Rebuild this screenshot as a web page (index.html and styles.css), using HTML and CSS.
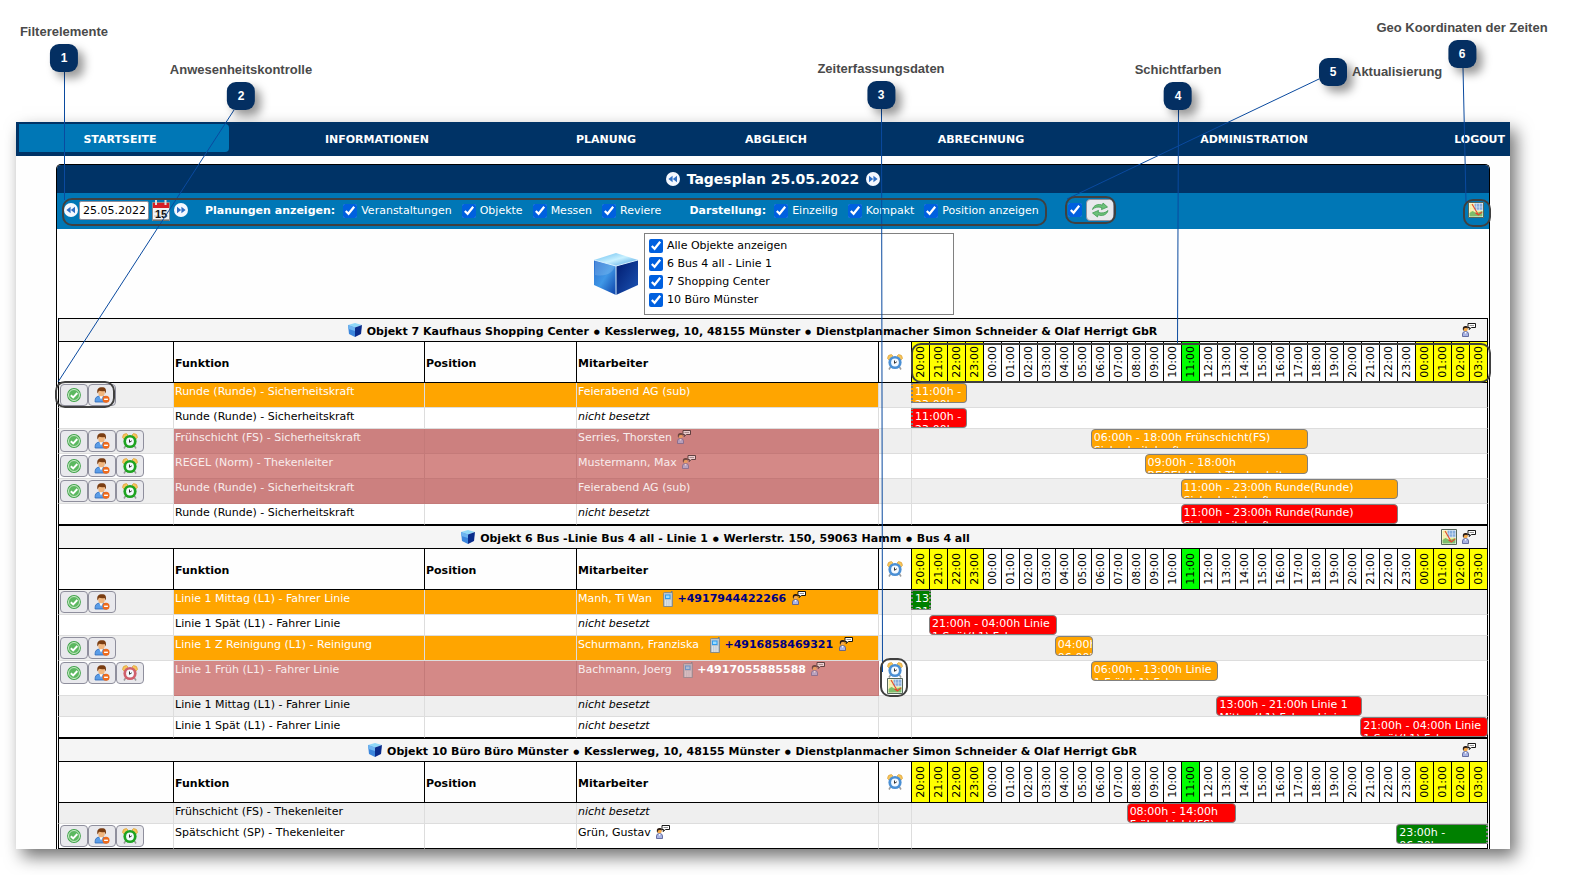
FILE: index.html
```html
<!DOCTYPE html>
<html lang="de">
<head>
<meta charset="utf-8">
<title>Tagesplan 25.05.2022</title>
<link rel="stylesheet" href="styles.css">
</head>
<body>
<svg class="defs" aria-hidden="true">
  <linearGradient id="gTop" x1="0" y1="0" x2="1" y2="1"><stop offset="0" stop-color="#5fb8ee"/><stop offset=".5" stop-color="#c9f1ff"/><stop offset="1" stop-color="#3f9be0"/></linearGradient>
  <linearGradient id="gLeft" x1="0" y1="0" x2="1" y2="1"><stop offset="0" stop-color="#2a6fd0"/><stop offset=".5" stop-color="#3f97e6"/><stop offset="1" stop-color="#0b3fa8"/></linearGradient>
  <linearGradient id="gRight" x1="0" y1="0" x2="1" y2="1"><stop offset="0" stop-color="#001a6e"/><stop offset="1" stop-color="#1c55b5"/></linearGradient>
  <symbol id="cube" viewBox="0 0 44 42"><path d="M22 0 44 7 22 13 0 7Z" fill="url(#gTop)"/><path d="M0 7 22 13V42L0 32Z" fill="url(#gLeft)"/><path d="M44 7 22 13V42L44 32Z" fill="url(#gRight)"/><path d="M0 7 22 13 44 7M22 13V42" fill="none" stroke="#d6f0ff" stroke-width="1"/><path d="M1 22C12 24 19 20 21 13L1 8Z" fill="#fff" opacity=".15"/></symbol>
  <symbol id="box" viewBox="0 0 14 14"><path d="M7 0 14 2 7 4.500 0 2Z" fill="#8fd8f8"/><path d="M0 2 7 4.500V14L1 11Z" fill="#3c86dc"/><path d="M0 2 7 4.500V8L.5 6Z" fill="#6db4f0"/><path d="M14 2 7 4.500V14L13 11Z" fill="#0a2c8c"/></symbol>
  <symbol id="prev" viewBox="0 0 14 14"><circle cx="7" cy="7" r="7" fill="#f4f8ff"/><path d="M6.600 3.800v6.400L2.400 7ZM11 3.800v6.400L6.800 7Z" fill="#2f6fc4"/></symbol>
  <symbol id="next" viewBox="0 0 14 14"><circle cx="7" cy="7" r="7" fill="#f4f8ff"/><path d="M7.400 3.800v6.400L11.600 7ZM3 3.800v6.400L7.200 7Z" fill="#2f6fc4"/></symbol>
  <symbol id="refresh" viewBox="0 0 18 16"><path d="M1.500 7.500C2.500 3 7.500 1.500 11.500 3.200L12 1l4.500 4-6 2.600.3-2C7 4.500 4 5 1.500 7.500Z" fill="#6cc07a" stroke="#3d9a50" stroke-width=".8"/><path d="M17 8.500C16 13 11 14.500 7 12.800L6.500 15 1.500 11l6-2.600-.3 2C11 11.500 14.500 11 17 8.500Z" fill="#6cc07a" stroke="#3d9a50" stroke-width=".8"/></symbol>
  <symbol id="map" viewBox="0 0 16 16"><path d="M.5.5h15v15H.5Z" fill="#fff" stroke="#56675a"/><path d="M1.500 1.500h5v13h-5Z" fill="#f4ec98"/><path d="M6.500 1.500h8v7h-8Z" fill="#86addd"/><path d="M6.500 8.500h8v3h-8Z" fill="#f4ec98"/><path d="M1.500 11l3-2 4 2 6-2v5.500h-13Z" fill="#7dbd6b"/><path d="M1.500 5h13M1.500 8h13M4 1.500v7M8.500 1.500v9M11.500 1.500v7" stroke="#fff" stroke-width=".5" opacity=".8"/><path d="M4 2 10.500 13 14 10M10.500 13 7.500 11" fill="none" stroke="#e3492f" stroke-width="1.100"/></symbol>
  <symbol id="say" viewBox="0 0 14 14"><path d="M.5 13.500V11q0-2.500 3-2.500t3 2.500v2.500Z" fill="#a9b4e4" stroke="#4c568f" stroke-width=".8"/><path d="M2.600 9l1 2 1-2Z" fill="#fff"/><circle cx="3.500" cy="6" r="2.300" fill="#f5a94a"/><path d="M.8 6.500C.5 3 3 2.500 5.500 3.500L6 5.500 4 4.800 2 5.500 1.500 8Z" fill="#2b1c14"/><path d="M6 .5h7.500v4H9.500L7 6.500l.5-2H6Z" fill="#fff" stroke="#000" stroke-width=".9"/><path d="M7.500 2.500h4.500" stroke="#777" stroke-width=".8"/></symbol>
  <symbol id="phone" viewBox="0 0 10 16"><path d="M8 0h1.500v3H8Z" fill="#6f7a86"/><path d="M.5 2.500q0-1 1-1h7q1 0 1 1v13h-9Z" fill="#b9c4ce" stroke="#75818d" stroke-width=".8"/><path d="M2 3.500h5.500V8H2Z" fill="#2d9cf0"/><path d="M3 4.500h3.500V7H3Z" fill="#9bdcff"/><path d="M2 10h6M2 12h6M2 14h6" stroke="#fff" stroke-dasharray="1.400 .8"/></symbol>
  <symbol id="ok" viewBox="0 0 14 14"><circle cx="7" cy="7" r="6.900" fill="#3fa348"/><circle cx="7" cy="7" r="5.500" fill="#5cb860" stroke="#d9f2d7" stroke-width=".9"/><path d="M3.800 7.200 6.200 9.500 10.300 5" fill="none" stroke="#fff" stroke-width="1.900"/></symbol>
  <symbol id="minus" viewBox="0 0 15 16"><path d="M.6 15C.4 10.500 2 9 6.500 9s6 1.500 6 6Z" fill="#5a9de8" stroke="#2b66b5" stroke-width=".8"/><path d="M4.800 9 6.500 12.500 8.500 9Z" fill="#fff"/><ellipse cx="7" cy="5.400" rx="3.300" ry="3.900" fill="#f1b67e"/><path d="M3 6.500C2 2 4 .2 7.500.2S12 2 11.300 6.500L10 4Q7 4.500 4.500 3.800Z" fill="#7a3d12"/><circle cx="11.500" cy="12.300" r="3.500" fill="#ee6a1c"/><path d="M9.600 12.300h3.800" stroke="#fff" stroke-width="1.400"/></symbol>
  <symbol id="alarm" viewBox="0 0 16 16"><path d="M3.500 13 2 15.500M12.500 13l1.500 2.500" stroke="#9a9a9a" stroke-width="1.500"/><path d="M.5 4.500Q.5.500 4.500.5L6 2 2 6ZM15.500 4.500q0-4-4-4L10 2l4 4Z" fill="#f7c55c" stroke="#d79a2c" stroke-width=".6"/><circle cx="8" cy="8.500" r="6.600" fill="currentColor"/><circle cx="8" cy="8.500" r="3.900" fill="#f5faff"/><path d="M7.500 6.500v2.800l2.300-1.500" fill="none" stroke="#333" stroke-width="1"/></symbol>
</svg>

<main class="figure">
<div class="page">
  <nav class="nav">
    <a class="active" href="#">STARTSEITE</a><a href="#">INFORMATIONEN</a><a href="#">PLANUNG</a><a href="#">ABGLEICH</a><a href="#">ABRECHNUNG</a><a href="#">ADMINISTRATION</a><a class="logout" href="#">LOGOUT</a>
  </nav>

  <section class="panel">
    <header class="heading">
      <button class="round" aria-label="Vorheriger Tag"><svg><use href="#prev"/></svg></button>
      <h1>Tagesplan 25.05.2022</h1>
      <button class="round" aria-label="Nächster Tag"><svg><use href="#next"/></svg></button>
    </header>

    <form class="filters">
      <div class="date">
        <button type="button" class="round" aria-label="Zurück"><svg><use href="#prev"/></svg></button>
        <input type="text" value="25.05.2022" aria-label="Datum">
        <button type="button" class="cal" aria-label="Kalender"><svg viewBox="0 0 18 21"><path d="M.5 2.500h17v18H.5Z" fill="#f4f4f4" stroke="#8a8a8a"/><path d="M1 3h16v5H1Z" fill="#d61f26"/><path d="M1 19.500h16v1H1Z" fill="#555"/><path d="M4 0v5M13.500 0v5" stroke="#ddd" stroke-width="2"/><path d="M2 12h14M2 16h14" stroke="#ccc"/><text class="day" x="9" y="18" text-anchor="middle">15</text></svg></button>
        <button type="button" class="round" aria-label="Weiter"><svg><use href="#next"/></svg></button>
      </div>
      <div class="group">
        <b>Planungen anzeigen:</b>
        <label><input type="checkbox" checked>Veranstaltungen</label>
        <label><input type="checkbox" checked>Objekte</label>
        <label><input type="checkbox" checked>Messen</label>
        <label><input type="checkbox" checked>Reviere</label>
      </div>
      <div class="group">
        <b>Darstellung:</b>
        <label><input type="checkbox" checked>Einzeilig</label>
        <label><input type="checkbox" checked>Kompakt</label>
        <label><input type="checkbox" checked>Position anzeigen</label>
      </div>
      <div class="update">
        <input type="checkbox" checked aria-label="Automatisch aktualisieren">
        <button type="button" class="btn" aria-label="Aktualisieren"><svg class="i18"><use href="#refresh"/></svg></button>
      </div>
      <button type="button" class="geo" aria-label="Karte"><svg class="i16"><use href="#map"/></svg></button>
    </form>

    <div class="objects">
      <svg class="bigcube"><use href="#cube"/></svg>
      <div class="objectlist">
        <label><input type="checkbox" checked>Alle Objekte anzeigen</label>
        <label><input type="checkbox" checked>6 Bus 4 all - Linie 1</label>
        <label><input type="checkbox" checked>7 Shopping Center</label>
        <label><input type="checkbox" checked>10 Büro Münster</label>
      </div>
    </div>

    <table class="plan">
      <colgroup><col class="c-act"><col class="c-fun"><col class="c-pos"><col class="c-emp"><col class="c-clock"><col span="32"></colgroup>
      <thead>
      <tr><th class="title" colspan="37"><div><span class="name"><svg class="i14"><use href="#box"/></svg><span>Objekt 7 Kaufhaus Shopping Center <span class="dot">●</span> Kesslerweg, 10, 48155 Münster <span class="dot">●</span> Dienstplanmacher Simon Schneider &amp; Olaf Herrigt GbR</span></span><span class="tools"><svg class="i14"><use href="#say"/></svg></span></div></th></tr>
      <tr class="head"><th></th><th>Funktion</th><th>Position</th><th>Mitarbeiter</th><th class="clock"><svg class="i16 blue"><use href="#alarm"/></svg></th><th><span>20:00</span></th><th><span>21:00</span></th><th><span>22:00</span></th><th><span>23:00</span></th><th><span>00:00</span></th><th><span>01:00</span></th><th><span>02:00</span></th><th><span>03:00</span></th><th><span>04:00</span></th><th><span>05:00</span></th><th><span>06:00</span></th><th><span>07:00</span></th><th><span>08:00</span></th><th><span>09:00</span></th><th><span>10:00</span></th><th><span>11:00</span></th><th><span>12:00</span></th><th><span>13:00</span></th><th><span>14:00</span></th><th><span>15:00</span></th><th><span>16:00</span></th><th><span>17:00</span></th><th><span>18:00</span></th><th><span>19:00</span></th><th><span>20:00</span></th><th><span>21:00</span></th><th><span>22:00</span></th><th><span>23:00</span></th><th><span>00:00</span></th><th><span>01:00</span></th><th><span>02:00</span></th><th><span>03:00</span></th></tr>
      </thead>
      <tbody>
      <tr class="orange"><td class="act"><div><button class="btn" aria-label="Anwesend"><svg class="i14"><use href="#ok"/></svg></button><button class="btn" aria-label="Abwesend"><svg class="i16"><use href="#minus"/></svg></button></div></td><td>Runde (Runde) - Sicherheitskraft</td><td></td><td>Feierabend AG (sub)</td><td></td><td class="lane" colspan="32"><div class="bar b-orange from" style="--s:0;--h:3">11:00h -<br>23:00h</div></td></tr>
      <tr><td></td><td>Runde (Runde) - Sicherheitskraft</td><td></td><td><i>nicht besetzt</i></td><td></td><td class="lane" colspan="32"><div class="bar b-red from" style="--s:0;--h:3">11:00h -<br>23:00h</div></td></tr>
      <tr class="pink"><td class="act"><div><button class="btn" aria-label="Anwesend"><svg class="i14"><use href="#ok"/></svg></button><button class="btn" aria-label="Abwesend"><svg class="i16"><use href="#minus"/></svg></button><button class="btn" aria-label="Zeit"><svg class="i16 green"><use href="#alarm"/></svg></button></div></td><td>Frühschicht (FS) - Sicherheitskraft</td><td></td><td>Serries, Thorsten <svg class="i14"><use href="#say"/></svg></td><td></td><td class="lane" colspan="32"><div class="bar b-orange" style="--s:10;--h:12">06:00h - 18:00h Frühschicht(FS)<br>Sicherheitskraft</div></td></tr>
      <tr class="pink"><td class="act"><div><button class="btn" aria-label="Anwesend"><svg class="i14"><use href="#ok"/></svg></button><button class="btn" aria-label="Abwesend"><svg class="i16"><use href="#minus"/></svg></button><button class="btn" aria-label="Zeit"><svg class="i16 green"><use href="#alarm"/></svg></button></div></td><td>REGEL (Norm) - Thekenleiter</td><td></td><td>Mustermann, Max <svg class="i14"><use href="#say"/></svg></td><td></td><td class="lane" colspan="32"><div class="bar b-orange" style="--s:13;--h:9">09:00h - 18:00h<br>REGEL(Norm) Thekenleiter</div></td></tr>
      <tr class="pink"><td class="act"><div><button class="btn" aria-label="Anwesend"><svg class="i14"><use href="#ok"/></svg></button><button class="btn" aria-label="Abwesend"><svg class="i16"><use href="#minus"/></svg></button><button class="btn" aria-label="Zeit"><svg class="i16 green"><use href="#alarm"/></svg></button></div></td><td>Runde (Runde) - Sicherheitskraft</td><td></td><td>Feierabend AG (sub)</td><td></td><td class="lane" colspan="32"><div class="bar b-orange" style="--s:15;--h:12">11:00h - 23:00h Runde(Runde)<br>Sicherheitskraft</div></td></tr>
      <tr><td></td><td>Runde (Runde) - Sicherheitskraft</td><td></td><td><i>nicht besetzt</i></td><td></td><td class="lane" colspan="32"><div class="bar b-red" style="--s:15;--h:12">11:00h - 23:00h Runde(Runde)<br>Sicherheitskraft</div></td></tr>
      </tbody>
    </table>

    <table class="plan">
      <colgroup><col class="c-act"><col class="c-fun"><col class="c-pos"><col class="c-emp"><col class="c-clock"><col span="32"></colgroup>
      <thead>
      <tr><th class="title" colspan="37"><div><span class="name"><svg class="i14"><use href="#box"/></svg><span>Objekt 6 Bus -Linie Bus 4 all - Linie 1 <span class="dot">●</span> Werlerstr. 150, 59063 Hamm <span class="dot">●</span> Bus 4 all</span></span><span class="tools wide"><svg class="i16"><use href="#map"/></svg><svg class="i14"><use href="#say"/></svg></span></div></th></tr>
      <tr class="head"><th></th><th>Funktion</th><th>Position</th><th>Mitarbeiter</th><th class="clock"><svg class="i16 blue"><use href="#alarm"/></svg></th><th><span>20:00</span></th><th><span>21:00</span></th><th><span>22:00</span></th><th><span>23:00</span></th><th><span>00:00</span></th><th><span>01:00</span></th><th><span>02:00</span></th><th><span>03:00</span></th><th><span>04:00</span></th><th><span>05:00</span></th><th><span>06:00</span></th><th><span>07:00</span></th><th><span>08:00</span></th><th><span>09:00</span></th><th><span>10:00</span></th><th><span>11:00</span></th><th><span>12:00</span></th><th><span>13:00</span></th><th><span>14:00</span></th><th><span>15:00</span></th><th><span>16:00</span></th><th><span>17:00</span></th><th><span>18:00</span></th><th><span>19:00</span></th><th><span>20:00</span></th><th><span>21:00</span></th><th><span>22:00</span></th><th><span>23:00</span></th><th><span>00:00</span></th><th><span>01:00</span></th><th><span>02:00</span></th><th><span>03:00</span></th></tr>
      </thead>
      <tbody>
      <tr class="orange"><td class="act"><div><button class="btn" aria-label="Anwesend"><svg class="i14"><use href="#ok"/></svg></button><button class="btn" aria-label="Abwesend"><svg class="i16"><use href="#minus"/></svg></button></div></td><td>Linie 1 Mittag (L1) - Fahrer Linie</td><td></td><td>Manh, Ti Wan <a class="tel" href="tel:+4917944422266"><svg class="phone"><use href="#phone"/></svg>+4917944422266</a> <svg class="i14"><use href="#say"/></svg></td><td></td><td class="lane" colspan="32"><div class="bar b-green from to" style="--s:0;--h:1">13:00h -<br>21:00h</div></td></tr>
      <tr><td></td><td>Linie 1 Spät (L1) - Fahrer Linie</td><td></td><td><i>nicht besetzt</i></td><td></td><td class="lane" colspan="32"><div class="bar b-red" style="--s:1;--h:7">21:00h - 04:00h Linie<br>1 Spät(L1) Fahrer</div></td></tr>
      <tr class="orange"><td class="act"><div><button class="btn" aria-label="Anwesend"><svg class="i14"><use href="#ok"/></svg></button><button class="btn" aria-label="Abwesend"><svg class="i16"><use href="#minus"/></svg></button></div></td><td>Linie 1 Z Reinigung (L1) - Reinigung</td><td></td><td>Schurmann, Franziska <a class="tel" href="tel:+4916858469321"><svg class="phone"><use href="#phone"/></svg>+4916858469321</a> <svg class="i14"><use href="#say"/></svg></td><td></td><td class="lane" colspan="32"><div class="bar b-orange" style="--s:8;--h:2">04:00h -<br>06:00h</div></td></tr>
      <tr class="pink tall"><td class="act"><div><button class="btn" aria-label="Anwesend"><svg class="i14"><use href="#ok"/></svg></button><button class="btn" aria-label="Abwesend"><svg class="i16"><use href="#minus"/></svg></button><button class="btn" aria-label="Zeit"><svg class="i16 red"><use href="#alarm"/></svg></button></div></td><td>Linie 1 Früh (L1) - Fahrer Linie</td><td></td><td>Bachmann, Joerg <a class="tel" href="tel:+4917055885588"><svg class="phone"><use href="#phone"/></svg>+4917055885588</a> <svg class="i14"><use href="#say"/></svg></td><td class="stack"><svg class="i16 blue"><use href="#alarm"/></svg><svg class="i16"><use href="#map"/></svg></td><td class="lane" colspan="32"><div class="bar b-orange" style="--s:10;--h:7">06:00h - 13:00h Linie<br>1 Früh(L1) Fahrer</div></td></tr>
      <tr><td></td><td>Linie 1 Mittag (L1) - Fahrer Linie</td><td></td><td><i>nicht besetzt</i></td><td></td><td class="lane" colspan="32"><div class="bar b-red" style="--s:17;--h:8">13:00h - 21:00h Linie 1<br>Mittag(L1) Fahrer Linie</div></td></tr>
      <tr><td></td><td>Linie 1 Spät (L1) - Fahrer Linie</td><td></td><td><i>nicht besetzt</i></td><td></td><td class="lane" colspan="32"><div class="bar b-red" style="--s:25;--h:7">21:00h - 04:00h Linie<br>1 Spät(L1) Fahrer</div></td></tr>
      </tbody>
    </table>

    <table class="plan">
      <colgroup><col class="c-act"><col class="c-fun"><col class="c-pos"><col class="c-emp"><col class="c-clock"><col span="32"></colgroup>
      <thead>
      <tr><th class="title" colspan="37"><div><span class="name"><svg class="i14"><use href="#box"/></svg><span>Objekt 10 Büro Büro Münster <span class="dot">●</span> Kesslerweg, 10, 48155 Münster <span class="dot">●</span> Dienstplanmacher Simon Schneider &amp; Olaf Herrigt GbR</span></span><span class="tools"><svg class="i14"><use href="#say"/></svg></span></div></th></tr>
      <tr class="head"><th></th><th>Funktion</th><th>Position</th><th>Mitarbeiter</th><th class="clock"><svg class="i16 blue"><use href="#alarm"/></svg></th><th><span>20:00</span></th><th><span>21:00</span></th><th><span>22:00</span></th><th><span>23:00</span></th><th><span>00:00</span></th><th><span>01:00</span></th><th><span>02:00</span></th><th><span>03:00</span></th><th><span>04:00</span></th><th><span>05:00</span></th><th><span>06:00</span></th><th><span>07:00</span></th><th><span>08:00</span></th><th><span>09:00</span></th><th><span>10:00</span></th><th><span>11:00</span></th><th><span>12:00</span></th><th><span>13:00</span></th><th><span>14:00</span></th><th><span>15:00</span></th><th><span>16:00</span></th><th><span>17:00</span></th><th><span>18:00</span></th><th><span>19:00</span></th><th><span>20:00</span></th><th><span>21:00</span></th><th><span>22:00</span></th><th><span>23:00</span></th><th><span>00:00</span></th><th><span>01:00</span></th><th><span>02:00</span></th><th><span>03:00</span></th></tr>
      </thead>
      <tbody>
      <tr><td></td><td>Frühschicht (FS) - Thekenleiter</td><td></td><td><i>nicht besetzt</i></td><td></td><td class="lane" colspan="32"><div class="bar b-red" style="--s:12;--h:6">08:00h - 14:00h<br>Frühschicht(FS)</div></td></tr>
      <tr><td class="act"><div><button class="btn" aria-label="Anwesend"><svg class="i14"><use href="#ok"/></svg></button><button class="btn" aria-label="Abwesend"><svg class="i16"><use href="#minus"/></svg></button><button class="btn" aria-label="Zeit"><svg class="i16 green"><use href="#alarm"/></svg></button></div></td><td>Spätschicht (SP) - Thekenleiter</td><td></td><td>Grün, Gustav <svg class="i14"><use href="#say"/></svg></td><td></td><td class="lane" colspan="32"><div class="bar b-green to" style="--s:27;--h:5">23:00h -<br>06:30h</div></td></tr>
      </tbody>
    </table>
  </section>
</div>

<svg class="marks" aria-hidden="true">
  <g class="leads"><path d="M64.500 72V200"/><path d="M234 110 58 382"/><path d="M881.500 109 882.500 672"/><path d="M1178.500 110 1177.500 345"/><path d="M1319 79 1067 199"/><path d="M1463 68 1466 202"/></g>
  <g class="frames"><rect x="63" y="199" width="983" height="26" rx="9"/><rect x="1066" y="197" width="49" height="26" rx="9"/><rect x="1464" y="200" width="26" height="26" rx="9"/><rect x="912" y="344" width="578" height="38" rx="9"/><rect x="56" y="382" width="58" height="25" rx="9"/><rect x="881" y="659" width="26" height="37" rx="9"/></g>
</svg>
<div class="callout n1"><span>Filterelemente</span><b>1</b></div>
<div class="callout n2"><span>Anwesenheitskontrolle</span><b>2</b></div>
<div class="callout n3"><span>Zeiterfassungsdaten</span><b>3</b></div>
<div class="callout n4"><span>Schichtfarben</span><b>4</b></div>
<div class="callout side n5"><b>5</b><span>Aktualisierung</span></div>
<div class="callout n6"><span>Geo Koordinaten der Zeiten</span><b>6</b></div>
</main>
</body>
</html>
```
FILE: styles.css
```css
* { box-sizing: border-box; }
body { margin: 0; background: #fff; color: #000; font: 11px/15px "DejaVu Sans", Verdana, sans-serif; }
button { margin: 0; padding: 0; border: 0; background: none; color: inherit; font: inherit; }
a { color: inherit; text-decoration: none; }
svg { flex: none; }
.defs { position: absolute; width: 0; height: 0; }
.i14 { width: 14px; height: 14px; }
.i16 { width: 16px; height: 16px; }
.i18 { width: 18px; height: 16px; }
.blue { color: #4a8fd4; }
.green { color: #1ea321; }
.red { color: #d0606c; }

.figure { position: relative; padding: 122px 74px 26px 16px; overflow: hidden; }
.page { background: #fefefe; box-shadow: 6px 8px 16px rgba(0, 0, 0, .55); }

.nav { display: grid; grid-template-columns: 213fr 296fr 162fr 178fr 232fr 314fr 99fr; height: 34px; background: #003366; color: #fff; font-weight: bold; }
.nav a { display: flex; align-items: center; justify-content: center; }
.nav .active { margin: 2px 0 4px 3px; padding: 2px 8px 0 0; border-radius: 0 4px 4px 0; background: #0077b6; }
.nav .logout { justify-content: flex-end; padding-right: 5px; }

.panel { margin: 8px 20px 0 40px; border: 1px solid #000; border-bottom: 0; border-radius: 5px 5px 0 0; }
.heading { display: flex; align-items: center; justify-content: center; gap: 7px; height: 28px; border-radius: 4px 4px 0 0; background: #003366; color: #fff; }
.heading h1 { margin: 0; font-size: 14px; line-height: 20px; }
.round, .round svg { display: block; width: 14px; height: 14px; }

input[type="checkbox"] { flex: none; width: 14px; height: 14px; margin: 0; accent-color: #0060df; }
label { display: flex; align-items: center; }
label input[type="checkbox"] { margin-top: 2px; }
.filters { display: flex; align-items: center; height: 36px; padding: 0 5px 2px 7px; background: #0077b6; color: #fff; }
.date { display: flex; align-items: center; }
.date input { width: 70px; height: 19px; margin: 0 3px 0 1px; padding: 0 3px; border: 1px solid #8f8f9d; border-radius: 2px; background: #fff; color: #000; font: inherit; }
.cal, .cal svg { display: block; width: 18px; height: 21px; }
.cal { margin-right: 4px; }
.day { font: bold 11px "Liberation Sans", Arial, sans-serif; fill: #111; }
.group { display: flex; align-items: center; gap: 10px; margin-left: 17px; }
.group + .group { margin-left: 28px; }
.group b { margin-right: -5px; padding-right: 3px; }
.group label, .objectlist label { gap: 4px; }
.update { display: flex; align-items: center; gap: 4px; margin-left: 29px; }
.geo { height: 16px; margin-left: auto; }
.btn { display: flex; align-items: center; justify-content: center; width: 28px; height: 22px; border: 1px solid #8f8f9d; border-radius: 4px; background: #e9e9ed; }

.objects { display: flex; align-items: center; justify-content: center; gap: 6px; padding: 4px 0 3px 2px; }
.bigcube { width: 44px; height: 42px; }
.objectlist { width: 310px; height: 82px; padding: 2px 4px; border: 1px solid #808080; background: #fff; }
.objectlist label { height: 18px; }

.plan { width: calc(100% - 2px); margin: 0 1px; table-layout: fixed; border-collapse: separate; border-spacing: 0; border-top: 1px solid #000; }
.c-act { width: 116px; }
.c-fun { width: 251px; }
.c-pos { width: 152px; }
.c-emp { width: 302px; }
.c-clock { width: 33px; }
.plan th, .plan td { padding: 0; text-align: left; border-right: 1px solid #ddd; border-bottom: 1px solid #ddd; }
.plan th { border-color: #000; }
.plan tr > :first-child { border-left: 1px solid #000; }
.plan tr > :last-child { border-right-color: #000; }
.title div { display: flex; align-items: center; height: 22px; background: #f5f5f5; }
.name { display: flex; flex: 1; align-items: center; justify-content: center; gap: 5px; }
.name > span { padding-top: 2px; }
.dot { display: inline-block; width: 8px; font-size: 7px; line-height: 11px; text-align: center; vertical-align: 1px; }
.tools { display: flex; justify-content: flex-end; align-items: center; gap: 5px; width: 41px; padding-right: 11px; }
.tools.wide { width: 115px; }
.plan .head th { height: 41px; padding: 2px 0 0 1px; vertical-align: middle; }
.plan .head .clock { padding: 0; text-align: center; }
.clock svg { vertical-align: middle; }
.plan .head th:nth-child(n+6) { padding: 0; text-align: center; font-weight: normal; }
.head span { display: inline-block; vertical-align: middle; writing-mode: vertical-rl; transform: rotate(180deg); line-height: 15px; }
.head th:nth-child(n+6):nth-child(-n+9), .head th:nth-child(n+34) { background: #ff0; }
.head th:nth-child(21) { background: #0f0; }

.plan td { height: 21px; padding: 1px; vertical-align: top; white-space: nowrap; }
.plan tbody tr:nth-child(odd) { background: #efefef; }
.plan tbody tr:nth-child(even) { background: #fff; }
.plan tbody tr:last-child td { border-bottom-color: #000; }
.act div { display: flex; }
td > .i14, .phone { vertical-align: top; }
td > .i14 { margin-left: 2px; }
.phone { width: 10px; height: 16px; margin: 0 4px 0 8px; }
.tel { display: inline-block; height: 15px; font-weight: bold; color: #000080; }
.orange td:nth-child(n+2):nth-child(-n+4) { background: #ffa500; color: #fff; }
.pink td:nth-child(n+2):nth-child(-n+4) { background: #cc807f; border-color: #c47a79; color: #f8ecec; }
.pink:nth-child(even) td:nth-child(n+2):nth-child(-n+4) { background: #d48987; }
.pink .tel { color: #fff; }
.pink td > .i14, .pink .phone { opacity: .6; }
.plan .tall td { height: 35px; }
.plan .stack svg { display: block; margin: 0 auto; opacity: 1; }
.plan .lane { padding: 0; }
.bar { height: 20px; margin-left: calc(var(--s) * 100% / 32 - 1px); margin-right: -1px; width: calc(var(--h) * 100% / 32 + 2px); padding: 1px 0 0 2px; overflow: hidden; border: 1px solid #808080; border-radius: 4px; color: #fff; line-height: 13px; }
.from { border-left: 2px dotted #808080; border-top-left-radius: 0; border-bottom-left-radius: 0; }
.to { border-right: 2px dotted #808080; border-top-right-radius: 0; border-bottom-right-radius: 0; }
.b-orange { background: #ffa500; }
.b-red { background: #f00; }
.b-green { background: #008000; }

.marks { position: absolute; top: 0; left: 0; width: 100%; height: 100%; pointer-events: none; }
.leads { fill: none; stroke: #0a4a9f; stroke-width: 1; }
.frames { fill: none; stroke: #404040; stroke-width: 2; }
.callout { position: absolute; display: flex; flex-direction: column; align-items: center; gap: 4px; transform: translateX(-50%); white-space: nowrap; font: bold 13px/16px "Liberation Sans", Arial, sans-serif; color: #4a4a4a; }
.callout b { width: 28px; height: 28px; border-radius: 9px; background: #042f62; box-shadow: 6px 6px 10px rgba(0, 0, 0, .4); color: #fff; font-size: 12px; line-height: 28px; text-align: center; }
.callout.side { flex-direction: row; gap: 5px; transform: none; }
.n1 { left: 64px; top: 24px; }
.n2 { left: 241px; top: 62px; }
.n3 { left: 881px; top: 61px; }
.n4 { left: 1178px; top: 62px; }
.n5 { left: 1319px; top: 58px; }
.n6 { left: 1462px; top: 20px; }
```
